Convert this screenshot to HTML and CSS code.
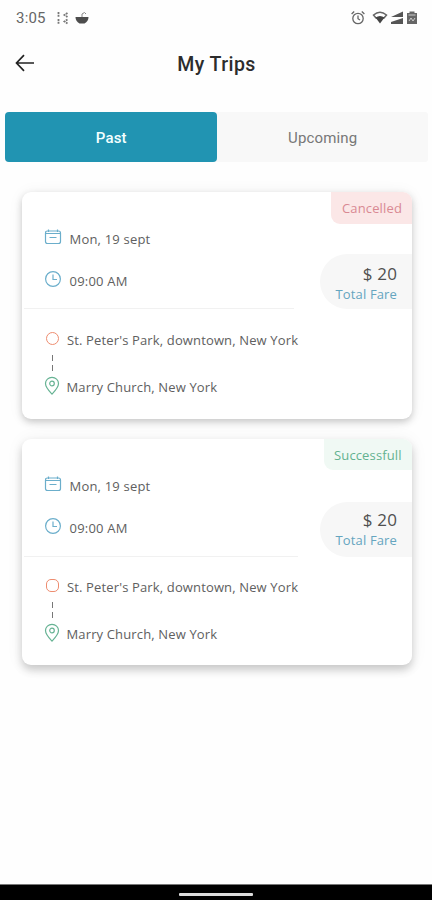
FILE: index.html
```html
<!DOCTYPE html>
<html lang="en">
<head>
<meta charset="utf-8">
<title>My Trips</title>
<link rel="stylesheet" href="styles.css">
</head>
<body>
<svg class="sprite" width="0" height="0">
  <symbol id="calendar" viewBox="0 0 18 18"><path d="M3.500 3h11q2 0 2 2v8.500q0 2-2 2h-11q-2 0-2-2V5q0-2 2-2zM4.500 1.500V4M13.500 1.500V4M1.500 5.500h15M5.500 9.500h7"/></symbol>
  <symbol id="clock" viewBox="0 0 18 18"><circle cx="9" cy="9" r="7.400"/><path d="M9 4.500V9.500h4"/></symbol>
  <symbol id="pin" viewBox="0 0 16 20"><path d="M8 18.200C5 15 1.500 11.500 1.500 7.600a6.500 6.300 0 0 1 13 0C14.500 11.500 11 15 8 18.200z"/><circle cx="8" cy="7.500" r="2.300"/></symbol>
</svg>
<main class="screen">
  <div class="status">
    <span class="time">3:05</span>
    <svg class="notifications" width="34" height="18" viewBox="0 0 34 18">
      <g fill="none" stroke="#777" stroke-width="1.800"><path d="M3.500 3v5M3.500 10v5M12.500 4L9.500 6l3 2M12.500 10.500l-3 2 3 2" stroke-dasharray="2 .7"/></g>
      <path fill="#4d4d4d" d="M20.500 8h13q0 4-4 6.500h-5q-4-2.500-4-6.500z"/><path fill="none" stroke="#888" d="M27 8V5q3-3 4 0"/>
    </svg>
    <svg class="system" width="70" height="18" viewBox="0 0 70 18">
      <g fill="none" stroke="#666" stroke-width="1.300"><circle cx="8" cy="9.500" r="5.200"/><path d="M8 6.500v3.200l2 1.300M1.600 5l2.600-2.500M14.400 5l-2.600-2.500"/></g>
      <path fill="none" stroke="#666" stroke-width="1.500" d="M23.500 6Q30 .5 36.500 6L34 9h-8z"/><path fill="#444" d="M25.500 8.500q4.500-3 9 0L30 14.500z"/>
      <path fill="#555" d="M53 2.500V8H41zM53 9v6H41v-2z"/>
      <path fill="#666" d="M57 4h2.500V2.500h5V4H67v11H57z"/><path fill="none" stroke="#ccc" d="M58.500 6h7M59 12l2-3 2 3 2-3"/>
    </svg>
  </div>
  <header class="header">
    <svg class="back" width="20" height="18" viewBox="0 0 20 18"><path d="M19 9H1.500M9 1.200L1.500 9 9 16.800"/></svg>
    <h1>My Trips</h1>
  </header>
  <nav class="tabs"><div class="tab active">Past</div><div class="tab">Upcoming</div></nav>
  <section class="trips">
    <article class="card">
      <div class="summary">
        <div class="when">
          <div class="row"><svg class="icon blue"><use href="#calendar"/></svg><span class="date">Mon, 19 sept</span></div>
          <div class="row"><svg class="icon blue"><use href="#clock"/></svg><span class="hour">09:00 AM</span></div>
        </div>
        <div class="side">
          <div class="badge cancelled"><span>Cancelled</span></div>
          <div class="fare"><span class="amount">$ 20</span><span class="label">Total Fare</span></div>
        </div>
      </div>
      <div class="route">
        <div class="stop from"><i class="origin"></i><span>St. Peter's Park, downtown, New York</span></div>
        <div class="dashes"></div>
        <div class="stop to"><svg class="pin"><use href="#pin"/></svg><span>Marry Church, New York</span></div>
      </div>
    </article>
    <article class="card second">
      <div class="summary">
        <div class="when">
          <div class="row"><svg class="icon blue"><use href="#calendar"/></svg><span class="date">Mon, 19 sept</span></div>
          <div class="row"><svg class="icon blue"><use href="#clock"/></svg><span class="hour">09:00 AM</span></div>
        </div>
        <div class="side">
          <div class="badge successful"><span>Successfull</span></div>
          <div class="fare"><span class="amount">$ 20</span><span class="label">Total Fare</span></div>
        </div>
      </div>
      <div class="route">
        <div class="stop from"><i class="origin"></i><span>St. Peter's Park, downtown, New York</span></div>
        <div class="dashes"></div>
        <div class="stop to"><svg class="pin"><use href="#pin"/></svg><span>Marry Church, New York</span></div>
      </div>
    </article>
  </section>
  <footer class="system-nav"><div class="handle"></div></footer>
</main>
</body>
</html>
```
FILE: styles.css
```css
* { box-sizing: border-box; }
body { margin: 0; background: #fefefe; font-family: "Open Sans", "Noto Sans", sans-serif; color: #606060; }
.sprite { display: block; height: 0; }
.screen { width: 432px; height: 900px; display: flex; flex-direction: column; overflow: hidden; }
.status { height: 36px; padding: 0 12px 0 16px; display: flex; align-items: center; font: 15px Roboto, sans-serif; letter-spacing: .2px; color: #666; }
.time { width: 39px; }
.system { margin-left: auto; }
.header { height: 56px; display: grid; grid-template-columns: 40px 1fr 40px; align-items: center; }
.back { margin-left: 15px; margin-top: -2px; fill: none; stroke: #222; stroke-width: 1.7; }
h1 { margin: 0; text-align: center; font: 500 19.5px Roboto, sans-serif; color: #2c2c2c; letter-spacing: .45px; padding-left: 1px; }
.tabs { margin: 20px 4px 0 5px; height: 50px; display: flex; background: #f8f8f8; border-radius: 3px; font: 15px Roboto, sans-serif; color: #777; letter-spacing: .15px; }
.tab { flex: 1; display: flex; align-items: center; justify-content: center; padding: 1px 0 0 1px; }
.active { background: #2194b2; color: #f4ffff; font-weight: 500; border-radius: 4px; }
.trips { padding: 30px 20px 0 22px; flex: 1; }
.card { height: 227px; border-radius: 9px; background: #fff; box-shadow: 0 3px 7px rgba(0,0,0,.19), 0 1px 16px rgba(0,0,0,.06); overflow: hidden; font-size: 13px; letter-spacing: .14px; }
.second { height: 226px; margin-top: 20px; box-shadow: 0 5px 8px rgba(0,0,0,.19), 0 1px 18px rgba(0,0,0,.06); }
.summary { display: flex; height: 117px; justify-content: space-between; }
.when { width: 270px; margin-left: 2px; padding: 35px 0 0 20px; border-bottom: 1px solid #f1f1f1; letter-spacing: .2px; }
.row { height: 24px; margin-bottom: 18px; display: flex; align-items: center; gap: 7.5px; }
.row span { padding-bottom: 1px; }
.icon { width: 18px; height: 18px; position: relative; top: -2px; fill: none; stroke: #6baecb; stroke-width: 1.2; }
.side { display: flex; flex-direction: column; align-items: flex-end; }
.badge { height: 32px; padding: 7px 10px 0 11px; border-bottom-left-radius: 9px; line-height: 18px; }
.cancelled { background: #fbe7e7; color: #d98993; width: 81px; }
.successful { background: #f0f9f4; color: #63b290; width: 88px; height: 31px; padding-left: 10px; }
.fare { width: 92px; height: 56px; margin-top: 30px; padding: 9px 15px 0 0; border-radius: 28px 0 0 28px; background: #f7f7f7; display: flex; flex-direction: column; align-items: flex-end; }
.second .fare { margin-top: 32px; padding-top: 7px; }
.second .summary { height: 118px; }
.second .when { width: 274px; }
.amount { font-size: 17px; line-height: 22px; color: #505050; }
.label { line-height: 18px; color: #65a5bf; }
.route { padding: 19px 0 0 22px; }
.stop { height: 24px; display: flex; align-items: center; }
.origin { width: 13px; height: 13px; margin: -4px 8px 0 2px; border: 1.5px solid #ee8d70; border-radius: 50%; }
.second .origin { border-radius: 5px; }
.dashes { margin: 3px 0 0 8px; height: 17px; width: 1px; background: linear-gradient(#777 6px, transparent 6px 10px, #777 10px 16px, transparent 16px); }
.to { margin-top: 3px; }
.pin { width: 16px; height: 20px; margin: -3px 7px 0 -.5px; fill: none; stroke: #67b394; stroke-width: 1.2; }
.second .route { padding-top: 18px; }
.system-nav { height: 16px; background: #000; border-top: 1px solid #777; display: flex; align-items: center; justify-content: center; }
.handle { width: 74px; height: 3px; border-radius: 1px; background: #ddd; margin-top: 3px; }
```
